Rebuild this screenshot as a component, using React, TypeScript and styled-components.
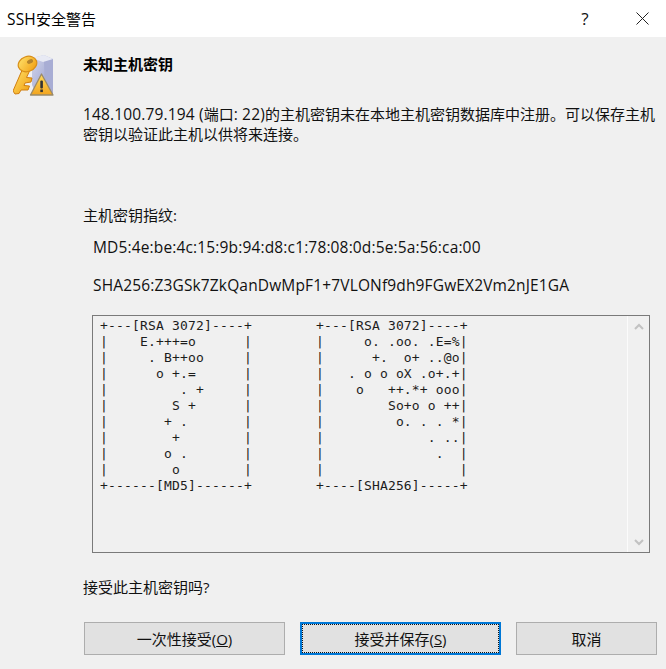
import React from "react";
import styled, { createGlobalStyle } from "styled-components";

const Global = createGlobalStyle`
  html, body { margin: 0; padding: 0; background: #f0f0f0; }
  body { font-family: "Open Sans", "Noto Sans CJK SC", sans-serif; color: #111; overflow: hidden; }
`;
const Dialog = styled.div`width: 666px; height: 669px; display: flex; flex-direction: column; background: #f0f0f0;`;
const TitleBar = styled.header`height: 37px; flex: none; background: #fff; display: flex; align-items: center; padding-left: 7px; font-size: 15px; color: #000;`;
const TitleText = styled.span`flex: 1; padding-bottom: 1px;`;
const TitleButton = styled.span<{ $gap?: number }>`width: 46px; height: 37px; display: flex; align-items: center; justify-content: center; font-size: 17px; color: #111; padding-bottom: 1px; box-sizing: border-box; margin-right: ${(p) => p.$gap ?? 0}px;`;
const Latin = styled.span`font-size: 15.5px; letter-spacing: 0.15px; line-height: 1;`;
const Content = styled.main`flex: 1; display: flex; flex-direction: column; padding: 17px 9px 13px 14px;`;
const Head = styled.div`display: flex; align-items: flex-start; height: 50px;`;
const IconSlot = styled.div`width: 69px; flex: none; height: 42px;`;
const IconSvg = styled.svg`display: block; margin: 1px 0 0 -1px;`;
const Heading = styled.h1`margin: 0; font-size: 15px; line-height: 20px; font-weight: 700; color: #000;`;
const TextColumn = styled.div`margin-left: 69px; font-size: 15px; line-height: 20px; color: #111;`;
const Message = styled.p`margin: 0; height: 101px; white-space: pre-line;`;
const Label = styled.p`margin: 0 0 12px;`;
const Print = styled.p`margin: 0 0 18px 10px; color: #111; font-size: 15.5px; letter-spacing: 0.15px;`;
const AsciiBox = styled.div`
  margin: 2px 0 0 78px; width: 558px; height: 238px; box-sizing: border-box; border: 1px solid #7a7a7a;
  display: flex; flex: none;
`;
const Ascii = styled.pre`
  flex: 1; margin: 0; padding: 2px 0 0 7px; font-family: "DejaVu Sans Mono", monospace; font-size: 13px; line-height: 16px;
  letter-spacing: 0.17px; color: #1c1c1c;
`;
const Scroll = styled.div`
  width: 22px; border-left: 1px solid #fbfbfb; display: flex; flex-direction: column; justify-content: space-between;
  align-items: center; padding: 7px 0 6px; box-sizing: border-box;
`;
const Question = styled.p`margin: 24px 0 0 69px; font-size: 15px; line-height: 20px; color: #111;`;
const Buttons = styled.div`display: flex; gap: 15px; margin: 25px 0 0 70px;`;
const Btn = styled.button<{ $w: number; $focus?: boolean }>`
  width: ${(p) => p.$w}px; height: 33px; box-sizing: border-box; padding: 0;
  background: #e1e1e1; border: ${(p) => (p.$focus ? "2px solid #0078d7" : "1px solid #adadad")};
  font: inherit; font-size: 15px; color: #111;
  outline: ${(p) => (p.$focus ? "1px dotted #111" : "none")};
  outline-offset: ${(p) => (p.$focus ? "-3px" : "0")};
`;

const left = `+---[RSA 3072]----+
|    E.+++=o      |
|     . B++oo     |
|      o +.=      |
|         . +     |
|        S +      |
|       + .       |
|        +        |
|       o .       |
|        o        |
+------[MD5]------+`.split("\n");
const right = `+---[RSA 3072]----+
|     o. .oo. .E=%|
|      +.  o+ ..@o|
|   . o o oX .o+.+|
|    o   ++.*+ ooo|
|        So+o o ++|
|         o. . . *|
|             . ..|
|              .  |
|                 |
+----[SHA256]-----+`.split("\n");
const art = left.map((l, i) => l + "        " + right[i]).join("\n");

const KeyIcon = () => (
  <IconSvg width="42" height="42" viewBox="0 0 42 42">
    <defs>
      <linearGradient id="box" x1="0" y1="0" x2="1" y2="1"><stop offset="0" stopColor="#d4d7ec" /><stop offset="1" stopColor="#8f96c8" /></linearGradient>
      <linearGradient id="key" x1="0" y1="0" x2="1" y2="1"><stop offset="0" stopColor="#ffe46e" /><stop offset="1" stopColor="#f09a0c" /></linearGradient>
      <linearGradient id="warn" x1="0" y1="0" x2="0" y2="1"><stop offset="0" stopColor="#ffdc5e" /><stop offset="1" stopColor="#f2a41e" /></linearGradient>
    </defs>
    <path d="M19 3 L31 0 L40 4 L40 40 L24 40 L19 30 Z" fill="url(#box)" />
    <path d="M31 6 L40 4 L40 40 L32 40 Z" fill="#a8add4" />
    <path d="M19 3 L31 0 L40 4 L30 7 Z" fill="#e8eaf4" />
    <path d="M10 13 L0 36 L2 39 L6 38.5 L8 35 L15 35 L16.5 31 L11 30.5 L12 28 L18 27 L19 23 L13.5 22.5 L17 15 Z" fill="url(#key)" stroke="#d07e10" strokeWidth="1" strokeLinejoin="round" />
    <ellipse cx="14.5" cy="9" rx="9.5" ry="7.5" fill="url(#key)" stroke="#d88e18" strokeWidth="1.2" transform="rotate(-20 14.5 9)" />
    <ellipse cx="17" cy="6.5" rx="3.2" ry="2" fill="#b4832c" transform="rotate(-25 17 6.5)" />
    <path d="M28.5 19 L40 40 L17.5 40 Z" fill="url(#warn)" stroke="#9a8a68" strokeWidth="1.3" strokeLinejoin="round" />
    <rect x="27.3" y="25.5" width="2.6" height="8" rx="1" fill="#333" />
    <rect x="27.3" y="34.5" width="2.6" height="2.6" fill="#333" />
  </IconSvg>
);

export default function App() {
  return (
    <Dialog>
      <Global />
      <TitleBar>
        <TitleText><Latin>SSH</Latin>安全警告</TitleText>
        <TitleButton $gap={11}>?</TitleButton>
        <TitleButton $gap={1}>
          <svg width="13" height="13" viewBox="0 0 13 13"><path d="M.5.5l12 12M12.5.5l-12 12" stroke="#222" fill="none" /></svg>
        </TitleButton>
      </TitleBar>
      <Content>
        <Head>
          <IconSlot><KeyIcon /></IconSlot>
          <Heading>未知主机密钥</Heading>
        </Head>
        <TextColumn>
          <Message><Latin>148.100.79.194 (</Latin>端口<Latin>: 22)</Latin>{"的主机密钥未在本地主机密钥数据库中注册。可以保存主机\n密钥以验证此主机以供将来连接。"}</Message>
          <Label>主机密钥指纹:</Label>
          <Print>MD5:4e:be:4c:15:9b:94:d8:c1:78:08:0d:5e:5a:56:ca:00</Print>
          <Print>SHA256:Z3GSk7ZkQanDwMpF1+7VLONf9dh9FGwEX2Vm2nJE1GA</Print>
        </TextColumn>
        <AsciiBox>
          <Ascii>{art}</Ascii>
          <Scroll>
            <svg width="10" height="7" viewBox="0 0 10 7"><path d="M1 6l4-4 4 4" stroke="#c2c2c2" strokeWidth="2" fill="none" /></svg>
            <svg width="10" height="7" viewBox="0 0 10 7"><path d="M1 1l4 4 4-4" stroke="#c2c2c2" strokeWidth="2" fill="none" /></svg>
          </Scroll>
        </AsciiBox>
        <Question>接受此主机密钥吗?</Question>
        <Buttons>
          <Btn $w={201}>一次性接受(<u>O</u>)</Btn>
          <Btn $w={201} $focus>接受并保存(<u>S</u>)</Btn>
          <Btn $w={141}>取消</Btn>
        </Buttons>
      </Content>
    </Dialog>
  );
}
